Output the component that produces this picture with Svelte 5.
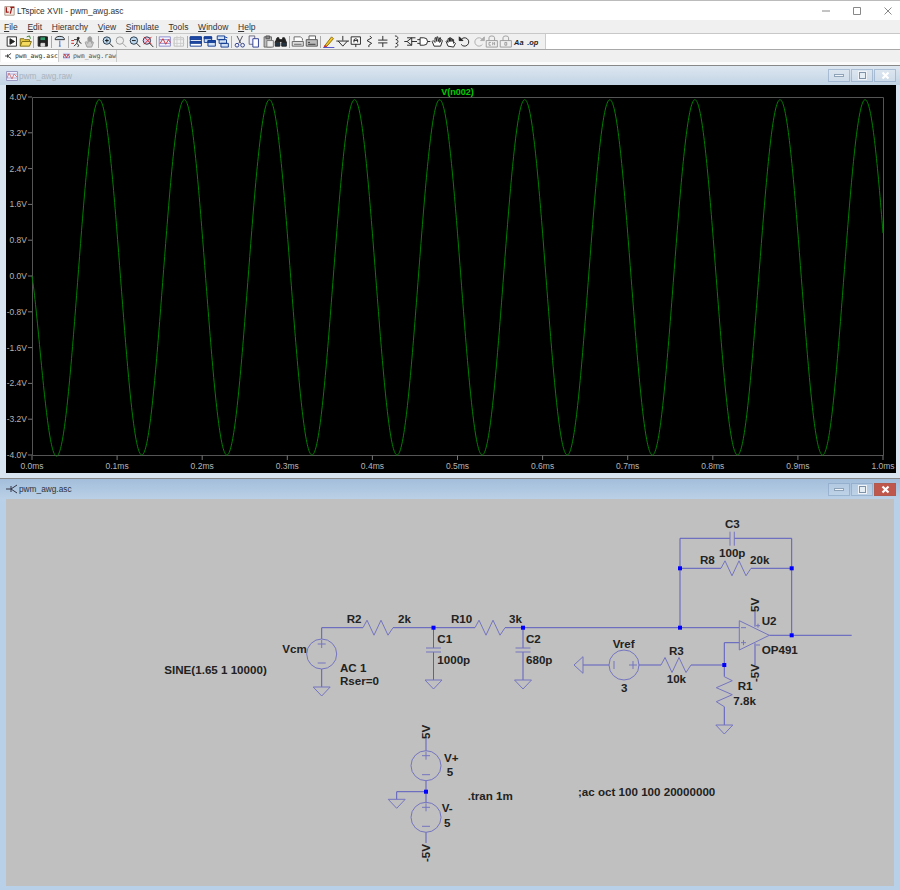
<script>
  const menus = [
    ['F', 'ile'], ['E', 'dit'], ['H', 'ierarchy'], ['V', 'iew'],
    ['S', 'imulate'], ['T', 'ools'], ['W', 'indow'], ['H', 'elp']
  ];

  const K = '#222';
  const B = '#113a90';
  const G = '#9a9a9a';
  const tools = [
    { s: [['M2 2h10v10H2z', K, '#fff'], ['M5 4l5 3-5 3z', K, K]] },
    { s: [['M1 12V4h4l1 1h5v2', '#7a6a10', '#e8c840'], ['M1 12l2-5h10l-2 5z', '#7a6a10', '#f5dc60'], ['M8 2l3-1 1 3', '#2a7a2a', 'none']] },
    { sep: 1, s: [['M2 2h10v10H2z', K, K], ['M4 2h6v4H4z', '#222', '#2f9a6a'], ['M5 9h4v3H5z', '#ddd', '#ddd']] },
    { sep: 1, s: [['M2 5a5 3.5 0 0 1 10 0z', K, '#cde'], ['M7 6v6', '#2a6ad0', 'none'], ['M6 12h2', '#2a6ad0', 'none']] },
    { sep: 1, s: [['M8.5 2.5a1 1 0 1 0 .1 0', K, K], ['M4 5h5l1 3 2 1M8 5L7 9l2 2-1 2M7 9l-3 3', K, 'none'], ['M1 6h3M1 9h3', '#d02020', 'none']] },
    { s: [['M4 13L2 8l1-1 2 2V3h1v4V2h1v5V2h1v5V3h1v6l1-2 1 1-2 5z', G, '#ccc']] },
    { sep: 1, s: [['M2 6a4 4 0 1 0 8 0a4 4 0 1 0-8 0', '#234', '#bcd8ee'], ['M9 9l4 4', K, 'none'], ['M6 4v4M4 6h4', '#111', 'none']] },
    { s: [['M2 6a4 4 0 1 0 8 0a4 4 0 1 0-8 0', G, '#eee'], ['M9 9l4 4', G, 'none']] },
    { s: [['M2 6a4 4 0 1 0 8 0a4 4 0 1 0-8 0', '#234', '#bcd8ee'], ['M9 9l4 4', K, 'none'], ['M4 6h4', '#111', 'none']] },
    { s: [['M2 6a4 4 0 1 0 8 0a4 4 0 1 0-8 0', '#234', '#dce'], ['M9 9l4 4', K, 'none'], ['M3 2l8 8M11 2l-8 8', '#d02020', 'none']] },
    { sep: 1, s: [['M1 2h12v10H1z', '#8888cc', '#f4f4ff'], ['M1 5h12M1 9h12', '#8888cc', 'none'], ['M2 9l3-5 3 6 3-5 2 3', '#d03030', 'none']] },
    { s: [['M2 3h10v9H2z', '#bbb', '#f4f4f4'], ['M1 5h12M1 9h12M5 1v12M9 1v12', '#ccc', 'none']] },
    { sep: 1, s: [['M1 2h12v10H1z', B, '#fff'], ['M1 2h12v3H1zM1 7h12v2H1z', B, '#1f4aa8']] },
    { s: [['M1 2h8v6H1z', B, '#cfe0f5'], ['M5 6h8v6H5z', B, '#cfe0f5'], ['M1 2h8v2H1zM5 6h8v2H5z', B, '#1f4aa8']] },
    { s: [['M1 1h8v4H1zM3 5h8v4H3zM5 9h8v4H5z', B, '#cfe0f5'], ['M9 2l3 1', B, 'none']] },
    { sep: 1, s: [['M4 1l4 8M10 1L6 9', '#445', 'none'], ['M2 11a2 2 0 1 0 4 0a2 2 0 1 0-4 0M8 11a2 2 0 1 0 4 0a2 2 0 1 0-4 0', '#2a3a90', 'none']] },
    { s: [['M2 1h6v9H2z', '#667', '#eef'], ['M6 4h6v9H6z', '#2a3a90', '#fff']] },
    { s: [['M3 2h8v11H3z', '#666', '#bbb'], ['M5 1h4v3H5z', '#555', '#888'], ['M6 6h7v7H6z', '#777', '#eee']] },
    { s: [['M1 8l2-5h2v4H1zM9 3h2l2 5v0H9z', K, K], ['M5 5h4v2H5z', K, K], ['M1 8h5v4H1zM8 8h5v4H8z', K, '#234']] },
    { sep: 1, s: [['M3 6V2h7l2 2v2', '#666', '#fff'], ['M1 7h12v5H1z', '#666', '#ddd'], ['M3 10h8', '#666', 'none']] },
    { s: [['M4 5V1h7v4', '#555', '#fff'], ['M1 5h12v7H1z', '#555', '#bbb'], ['M3 10h8M3 8h2', '#333', 'none']] },
    { sep: 1, s: [['M3 11L10 2l2 2-7 8-3 1z', '#8a6a10', '#f2c820'], ['M3 11l-1 2 3-1', '#d03030', '#d03030'], ['M1 13.5h12', '#4a4ad0', 'none']] },
    { s: [['M7 1v5', K, 'none'], ['M0 6.500h14', K, 'none'], ['M2 6.500L7 12l5-5.500', K, 'none']] },
    { s: [['M2 2h10v8H2z', K, '#fff'], ['M7 10v3', K, 'none'], ['M5 8V5l2-1 2 1v3M5 6h4', K, 'none']] },
    { s: [['M7 1l2 2-5 3 5 3-3 2', K, 'none'], ['M6 11v2', K, 'none']] },
    { s: [['M7 1v4.500M7 8.500v4.500', K, 'none'], ['M2 5.500h10M2 8.500h10', K, 'none']] },
    { s: [['M5 1c4 0 4 4 1 4c3 0 3 4 0 4c3 0 3 4-1 4', K, 'none']] },
    { s: [['M0 7h3l5-4v8l-5-4M8 3h4M3 3h5M8 11H3M8 7h6', K, 'none']] },
    { s: [['M3 3h4a4 4 0 0 1 0 8H3z', K, '#fff'], ['M0 5h3M0 9h3M11 7h3', K, 'none']] },
    { s: [['M3 12L1 7l1-1 2 2 0-5 1 0 1 4 0-5 1 0 1 5 1-4 1 0-1 5 2-3 1 1-2 6z', K, '#fff']] },
    { s: [['M4 12L2 7l1-1 1 2V4h1.500v3V3H7v4V4h1.500v3V5H10v4l1-1 1 1-2 4z', K, '#fff']] },
    { s: [['M3 5a4.500 4.500 0 1 1 0 5', K, 'none'], ['M1 2v4h4z', K, K]] },
    { s: [['M11 5a4.500 4.500 0 1 0 0 5', '#aaa', 'none'], ['M13 2v4H9z', '#aaa', '#aaa']] },
    { s: [['M1 6h12v7H1z', G, 'none'], ['M4 6V3a3 2 0 0 1 6 0v3', G, 'none'], ['M4 8v3M4 8h2M4 11h2M8 11V8l1 1 1-1v3', G, 'none']] },
    { s: [['M1 6h12v7H1z', G, 'none'], ['M4 6V3a3 2 0 0 1 6 0v3', G, 'none'], ['M6 8h2v3H6z', G, 'none']] },
    { t: 'Aa', s: [] },
    { t: '.op', s: [] }
  ];

  const Y0 = 276;
  const voltsY = (v) => Y0 - v * 44.75;
  const msX = (t) => 32 + t * 851;
  const yTicks = [];
  for (let i = 0; i <= 10; i++) yTicks.push(4 - i * 0.8);
  const xTicks = [];
  for (let i = 0; i <= 10; i++) xTicks.push(i / 10);

  // 10 kHz steady state plus the start-up transient of the filter
  function wave() {
    let d = '';
    for (let i = 0; i <= 1700; i++) {
      const t = i / 1700;
      const steady = -0.03 + 3.97 * Math.sin((2 * Math.PI * (t - 0.054)) / 0.1);
      const v = steady - 0.958 * Math.exp(-t / 0.008);
      d += (i ? 'L' : 'M') + msX(t).toFixed(2) + ' ' + voltsY(v).toFixed(2);
    }
    return d;
  }

  const volts = (v) => {
    const n = Math.abs(v) < 0.01 ? 0 : v;
    return n.toFixed(1) + 'V';
  };

  const resH = (x, y) =>
    `M${x} ${y}l4 -7.5l7 15l7 -15l7 15l5 -7.5`;
  const resV = (x, y) =>
    `M${x} ${y}l8 4l-16 7l16 7l-16 7l8 5`;
  const gnd = (x, y) => `M${x - 8.5} ${y}h17l-8.500 9z`;

  const wires = [
    'M321.7 639V627.7H363', 'M393 627.7H475', 'M505 627.7H739',
    'M321.7 669V687', 'M433.5 627.7V648', 'M433.5 652V680',
    'M523 627.7V648', 'M523 652V680',
    'M680 627.700V538.300H730', 'M734.300 538.300H791.700V635',
    'M680 568.300H721', 'M751 568.300H791.700',
    'M769.300 635.300H851.700', 'M739.300 642.700H724.300V676.700',
    'M609 665H583', 'M639 665H661', 'M691 665H724.300', 'M724.300 706.700V725',
    'M755 611.700V626.700', 'M755 643.300V665',
    'M426 739V750.700', 'M426 780.700V802.300', 'M426 832.300V843',
    'M426 791.700H396.700V799.300'
  ];

  const symbols = [
    resH(363, 627.7), resH(475, 627.7), resH(721, 568.3), resH(661, 665), resV(724.3, 676.7),
    gnd(321.7, 687), gnd(433.5, 680), gnd(523, 680), gnd(724.3, 725), gnd(396.700, 799.300),
    'M583 656.700V673.300L574 665z',
    'M426 648h15M426 652h15', 'M515.500 648h15M515.500 652h15',
    'M730 531.700V545.700M734.300 531.700V545.700',
    'M739.300 620.700V650L769.300 635.300z',
    'M741 627.700h5M741 642.700h5M743.500 640.200v5',
    'M756 625.700h4M758 623.700v4M756 645h4'
  ];

  const sources = [
    { x: 321.7, y: 654, flat: true },
    { x: 426, y: 765.7, flat: true },
    { x: 426, y: 817.3, flat: true },
    { x: 624, y: 665, flat: false }
  ];

  const dots = [
    [433.5, 627.7], [523, 627.7], [680, 627.7], [680, 568.3], [791.7, 568.3],
    [791.7, 635.3], [724.3, 665], [426, 791.7]
  ];

  const labels = [
    ['R2', 346.7, 623.3], ['2k', 398, 623.3], ['R10', 451, 623.3], ['3k', 509, 623.3],
    ['Vcm', 282.3, 653.3], ['SINE(1.65 1 10000)', 164.3, 674], ['AC 1', 340, 672.3],
    ['Rser=0', 340, 685], ['C1', 437.3, 643.3], ['1000p', 437.3, 664], ['C2', 526, 643.3],
    ['680p', 526, 664], ['C3', 725, 528], ['100p', 719, 556.7], ['R8', 700, 564.3],
    ['20k', 750, 564.3], ['U2', 761.7, 625], ['OP491', 761.7, 654], ['Vref', 612.7, 648],
    ['3', 621, 691.7], ['R3', 669, 655], ['10k', 666.7, 682.7], ['R1', 737.7, 690],
    ['7.8k', 733.3, 705], ['V+', 444, 761.7], ['5', 446.700, 775.700], ['V-', 441.700, 812.300],
    ['5', 444, 826.700], ['.tran 1m', 467.700, 800], [';ac oct 100 100 20000000', 578, 796]
  ];

  const rotated = [
    ['5V', 758.5, 612], ['-5V', 758.5, 682], ['5V', 429.5, 739], ['-5V', 429.5, 862]
  ];
</script>

<div class="desktop">
  <header class="titlebar">
    <svg class="logo" viewBox="0 0 14 14" width="11" height="11">
      <path d="M1 2h12v11H1z" fill="#f4ece4" stroke="#a08878" />
      <path d="M3 3v6h3M8 3h5M10 3l-2 8" fill="none" stroke="#a01818" stroke-width="1.600" />
    </svg>
    <span class="apptitle">LTspice XVII - pwm_awg.asc</span>
    <div class="caption">
      <svg viewBox="0 0 8 8" width="8" height="8"><path d="M0 4h8" stroke="#888" /></svg>
      <svg viewBox="0 0 8 8" width="8" height="8"><path d="M0.500 0.500h7v7h-7z" fill="none" stroke="#888" /></svg>
      <svg viewBox="0 0 8 8" width="8" height="8"><path d="M0.500 0.500l7 7M7.500 0.500l-7 7" stroke="#888" /></svg>
    </div>
  </header>

  <nav class="menubar">
    {#each menus as [key, rest]}
      <span class="menu"><u>{key}</u>{rest}</span>
    {/each}
  </nav>

  <div class="toolbar">
    <div class="tools">
      {#each tools as tool}
        {#if tool.sep}<i class="sep"></i>{/if}
        <svg class="tool" viewBox="0 0 14 14" width="14" height="14">
          {#each tool.s as [d, stroke, fill]}
            <path {d} {stroke} {fill} />
          {/each}
          {#if tool.t}
            <text class="tooltext" x="7" y="10.500" text-anchor="middle">{tool.t}</text>
          {/if}
        </svg>
      {/each}
    </div>
  </div>

  <div class="tabs">
    <div class="tab active">
      <svg viewBox="0 0 8 8" width="8" height="8"><path d="M0 4h3l4-3M3 4l4 3M3 2v4" fill="none" stroke="#333" /></svg>
      <span>pwm_awg.asc</span>
    </div>
    <div class="tab">
      <svg viewBox="0 0 8 8" width="8" height="8"><path d="M0 0h8v8H0z" fill="#e8e8ff" /><path d="M0 2h8M0 6h8" stroke="#7777bb" /><path d="M0 6l2-4 2 4 2-4 2 4" fill="none" stroke="#c03030" /></svg>
      <span>pwm_awg.raw</span>
    </div>
  </div>
  <div class="tabgap"></div>

  <section class="mdi plotwin">
    <div class="wintitle">
      <svg class="winicon" viewBox="0 0 12 12" width="12" height="12">
        <path d="M0.500 1.500h11v9h-11z" fill="#eef" stroke="#9a9ac4" />
        <path d="M1 4h10M1 8h10" stroke="#b0b0d8" />
        <path d="M1 8l2-5 3 6 2-5 3 3" fill="none" stroke="#d08080" />
      </svg>
      <span>pwm_awg.raw</span>
      <div class="winbtns">
        <b><i class="dash"></i></b>
        <b><i class="box"></i></b>
        <b><svg viewBox="0 0 9 9" width="9" height="9"><path d="M1.500 1.500l6 6M7.500 1.500l-6 6" stroke="#fff" stroke-width="2.200" /></svg></b>
      </div>
    </div>
    <div class="winbody">
      <svg class="canvas" viewBox="6 85 890 388" width="890" height="388">
        <rect x="6" y="85" width="890" height="388" fill="#000" />
        <path d="M32.500 97.500H883.500V455.500H32.500z" fill="none" stroke="#555" />
        {#each yTicks as v}
          <path d="M28 {voltsY(v)}H32" stroke="#777" />
          <text class="axis" x="27" y={voltsY(v) + 3} text-anchor="end">{volts(v)}</text>
        {/each}
        {#each xTicks as t}
          <path d="M{msX(t)} 455.500V460" stroke="#777" />
          <text class="axis" x={msX(t)} y="469" text-anchor="middle">{t.toFixed(1)}ms</text>
        {/each}
        <text class="trace" x="457.500" y="94.500" text-anchor="middle">V(n002)</text>
        <path d={wave()} fill="none" stroke="#008000" stroke-width="1" />
      </svg>
    </div>
  </section>

  <section class="mdi schemwin">
    <div class="wintitle">
      <svg class="winicon" viewBox="0 0 12 12" width="12" height="12">
        <path d="M0 6h5M5 3v6M5 6l6-4M5 6l6 4" fill="none" stroke="#334" />
      </svg>
      <span>pwm_awg.asc</span>
      <div class="winbtns">
        <b><i class="dash"></i></b>
        <b><i class="box"></i></b>
        <b class="close"><svg viewBox="0 0 9 9" width="9" height="9"><path d="M1.500 1.500l6 6M7.500 1.500l-6 6" stroke="#fff" stroke-width="2.200" /></svg></b>
      </div>
    </div>
    <div class="winbody">
      <svg class="canvas" viewBox="6 499 888 387" width="888" height="387">
        <rect x="6" y="499" width="888" height="387" fill="#c0c0c0" />
        {#each wires as d}
          <path {d} fill="none" stroke="#5c5cc0" />
        {/each}
        {#each symbols as d}
          <path {d} fill="none" stroke="#7474c0" />
        {/each}
        {#each sources as src}
          <circle cx={src.x} cy={src.y} r="15" fill="none" stroke="#7474c0" />
          {#if src.flat}
            <path d="M{src.x - 4} {src.y - 10}h8M{src.x} {src.y - 14}v8M{src.x - 4} {src.y + 9}h8" stroke="#7474c0" />
          {:else}
            <path d="M{src.x - 10} {src.y - 4}v8M{src.x + 5} {src.y}h8M{src.x + 9} {src.y - 4}v8" stroke="#7474c0" />
          {/if}
        {/each}
        {#each dots as [x, y]}
          <rect x={x - 2} y={y - 2} width="4" height="4" fill="#0000ff" />
        {/each}
        {#each labels as [text, x, y]}
          <text class="lbl" {x} {y}>{text}</text>
        {/each}
        {#each rotated as [text, x, y]}
          <text class="lbl" {x} {y} transform="rotate(-90 {x} {y})">{text}</text>
        {/each}
      </svg>
    </div>
  </section>
</div>

<style>
  :global(body) {
    margin: 0;
    background: #f0f0f0;
  }

  .desktop {
    width: 900px;
    height: 890px;
    overflow: hidden;
    display: flex;
    flex-direction: column;
    font-family: "Liberation Sans", Arial, sans-serif;
    color: #222;
  }

  .titlebar {
    height: 19px;
    flex: none;
    display: flex;
    align-items: center;
    padding-left: 4px;
    background: #fff;
    border-top: 1px solid #bbb;
    font-size: 8.400px;
  }

  .logo {
    margin-right: 2px;
  }

  .apptitle {
    flex: 1;
    color: #333;
  }

  .caption {
    display: flex;
    gap: 23px;
    padding-right: 8px;
  }

  .menubar {
    height: 13px;
    flex: none;
    display: flex;
    align-items: center;
    background: #f0f0f0;
    padding-left: 4px;
    font-size: 8.500px;
    gap: 9.700px;
    color: #333;
  }

  .toolbar {
    height: 15px;
    flex: none;
    background: #fff;
    border-top: 1px solid #c8c8c8;
    border-bottom: 1px solid #a8a8a8;
    display: flex;
  }

  .tools {
    width: 540px;
    padding-left: 5px;
    background: #f0f0f0;
    border-right: 1px solid #ccc;
    display: flex;
    align-items: center;
  }

  .tool {
    width: 13.600px;
    height: 13px;
    flex: none;
  }

  .tooltext {
    font-size: 8px;
    font-weight: 700;
    font-style: italic;
    fill: #222;
  }

  .sep {
    width: 1px;
    height: 12px;
    margin: 0 1.250px;
    flex: none;
    background: #aaa;
  }

  .tabs {
    height: 12px;
    flex: none;
    display: flex;
    padding-left: 1px;
    background: #f0f0f0;
  }

  .tab {
    width: 58px;
    display: flex;
    align-items: center;
    gap: 3px;
    padding-left: 4px;
    box-sizing: border-box;
    border-right: 1px solid #ccc;
    font-family: "DejaVu Sans Mono", monospace;
    font-size: 6.500px;
    color: #555;
  }

  .tab.active {
    background: #fff;
    color: #333;
  }

  .tabgap {
    height: 4px;
    flex: none;
    background: #fbfbfb;
    border-bottom: 1px solid #888;
    box-sizing: border-box;
  }

  .mdi {
    flex: none;
    display: flex;
    flex-direction: column;
  }

  .wintitle {
    height: 19px;
    flex: none;
    display: flex;
    align-items: center;
    padding-left: 6px;
    font-size: 8.300px;
  }

  .winicon {
    margin-right: 1px;
  }

  .wintitle span {
    flex: 1;
  }

  .winbtns {
    display: flex;
    gap: 1px;
    padding-right: 4px;
  }

  .winbtns b {
    width: 22px;
    height: 13px;
    box-sizing: border-box;
    border: 1px solid rgba(120, 150, 185, 0.5);
    background: rgba(255, 255, 255, 0.12);
    display: flex;
    align-items: center;
    justify-content: center;
  }

  .winbtns b.close {
    background: #c0574c;
    border-color: #b0594f;
  }

  .dash {
    width: 8px;
    background: #f0f4f8;
    border: 1px solid #8fa3b8;
    height: 1px;
  }

  .box {
    width: 5px;
    height: 5px;
    background: #e4ecf4;
    border: 1px solid #7f93a8;
    outline: 1px solid #f0f4f8;
  }

  .winbody {
    padding-left: 6px;
    display: flex;
  }

  .canvas {
    display: block;
    flex: none;
  }

  .plotwin {
    height: 413px;
    background: #d8e4ef;
    border-bottom: 1px solid #888;
    box-sizing: border-box;
  }

  .plotwin .wintitle {
    background: linear-gradient(#dde7f1, #c2d3e4);
    color: #a8b4c0;
  }

  .plotwin .winbody {
    height: 393px;
    align-items: flex-start;
  }

  .schemwin {
    height: 411px;
    background: #b8d0e8;
  }

  .schemwin .wintitle {
    height: 20px;
    background: linear-gradient(#a3bedb, #bad0e6);
    color: #2a3440;
  }

  .axis {
    fill: #b4b4b4;
    font-size: 8.500px;
  }

  .trace {
    fill: #00d000;
    font-size: 9px;
    font-weight: 700;
  }

  .lbl {
    fill: #222;
    font-size: 11.600px;
    font-weight: 700;
  }
</style>
